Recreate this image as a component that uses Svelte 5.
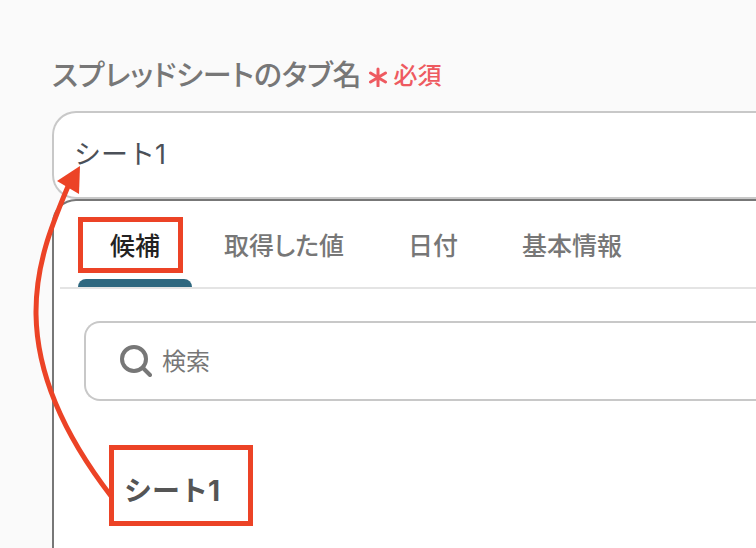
<script lang="ts">
	type Tab = { id: string; label: string }

	const tabs: Tab[] = [
		{ id: 'candidates', label: '候補' },
		{ id: 'values', label: '取得した値' },
		{ id: 'date', label: '日付' },
		{ id: 'basic', label: '基本情報' },
	]

	const candidates = ['シート1']

	let currentTab = $state('candidates')
	let sheetName = $state('シート1')
	let keyword = $state('')

	const filtered = $derived(candidates.filter(name => name.includes(keyword)))
</script>

<main class="page">
	<div class="field">
		<label class="label" for="sheet-name">
			<span>スプレッドシートのタブ名</span>
			<span class="required">
				<svg class="asterisk" viewBox="0 0 20 28" aria-hidden="true">
					<path d="M10 10v17M2.5 14l15 9M17.5 14l-15 9" />
				</svg>
				必須
			</span>
		</label>
		<input id="sheet-name" class="name-input" type="text" bind:value={sheetName} />

		<section class="panel">
			<div class="tabs" role="tablist">
				{#each tabs as tab}
					<button
						class="tab"
						class:active={currentTab === tab.id}
						role="tab"
						aria-selected={currentTab === tab.id}
						onclick={() => (currentTab = tab.id)}>{tab.label}</button
					>
				{/each}
			</div>

			<label class="search">
				<svg class="search-icon" viewBox="0 0 32 32" aria-hidden="true">
					<circle cx="14" cy="14" r="12" />
					<path d="M23 23l7 7" />
				</svg>
				<input type="search" placeholder="検索" aria-label="検索" bind:value={keyword} />
			</label>

			{#if currentTab === 'candidates'}
				<div class="options">
					{#each filtered as name}
						<button class="option" onclick={() => (sheetName = name)}>{name}</button>
					{/each}
				</div>
			{/if}
		</section>
	</div>

	<!-- Guide marks over the form -->
	<svg class="marks" width="260" height="548" aria-hidden="true">
		<rect x="80.5" y="219.5" width="100" height="51" />
		<rect x="111.5" y="447.5" width="139" height="76" />
		<path d="M111 496C-3 348 39 256 69 184" />
		<polygon points="80,166 57,181 79,194" />
	</svg>
</main>

<style>
	:global(body) {
		margin: 0;
		background: #fafafa;
	}

	.page {
		position: relative;
		box-sizing: border-box;
		min-height: 100vh;
		padding: 55px 0 0 52px;
		display: flex;
		overflow: hidden;
		font-family: Inter, 'Noto Sans CJK JP', sans-serif;
		color: #777;
	}

	.field {
		flex: 1;
		display: flex;
		flex-direction: column;
	}

	input,
	button {
		box-sizing: border-box;
		margin: 0;
		border: none;
		background: none;
		font: inherit;
	}

	.label,
	.tabs {
		font-feature-settings: 'palt';
	}

	.label {
		display: flex;
		align-items: center;
		gap: 6px;
		height: 36px;
		margin-bottom: 20px;
		font-size: 29px;
		font-weight: 500;
	}

	.required {
		display: flex;
		align-items: center;
		gap: 6px;
		font-size: 24px;
		color: #ee5a60;
	}

	.asterisk {
		width: 20px;
		height: 28px;
		fill: none;
		stroke: currentColor;
		stroke-width: 3;
		stroke-linecap: round;
	}

	.name-input {
		height: 88px;
		padding: 0 20px 6px;
		border: 2px solid #c8c8c8;
		border-right: none;
		border-radius: 24px 0 0 24px;
		background: #fff;
		font-size: 27px;
		color: #4b5058;
		outline: none;
	}

	.panel {
		flex: 1;
		border: 2px solid #777;
		border-width: 2px 0 0 2px;
		border-radius: 24px 0 0 0;
		background: #fff;
	}

	.tabs {
		display: flex;
		margin-left: 6px;
		padding-left: 18px;
		border-bottom: 2px solid #e4e4e4;
	}

	.tab {
		position: relative;
		height: 86px;
		padding: 0 32px;
		font-size: 25px;
		font-weight: 500;
		font-feature-settings: inherit;
		color: #777;
	}

	.tab.active {
		color: #222;
	}

	.tab.active::after {
		content: '';
		position: absolute;
		inset: auto 0 0;
		height: 8px;
		border-radius: 8px 8px 0 0;
		background: #2f6880;
	}

	.search {
		display: flex;
		align-items: center;
		gap: 10px;
		box-sizing: border-box;
		height: 80px;
		margin: 32px 0 0 30px;
		padding-left: 34px;
		border: 2px solid #c8c8c8;
		border-right: none;
		border-radius: 16px 0 0 16px;
	}

	.search-icon {
		width: 32px;
		height: 32px;
		fill: none;
		stroke: #777;
		stroke-width: 4;
		stroke-linecap: round;
	}

	.search input {
		flex: 1;
		padding: 0;
		font-size: 24px;
		color: #777;
		outline: none;
	}

	.search input::placeholder {
		color: #777;
		opacity: 1;
	}

	.options {
		display: flex;
		flex-direction: column;
		padding: 48px 0 0 54px;
	}

	.option {
		height: 80px;
		padding: 0 16px;
		font-size: 28px;
		font-weight: 700;
		text-align: left;
		color: #555;
	}

	.marks {
		position: absolute;
		top: 0;
		left: 0;
		pointer-events: none;
		fill: none;
		stroke: #ec4326;
		stroke-width: 5;
	}

	.marks polygon {
		fill: #ec4326;
		stroke: none;
	}
</style>
